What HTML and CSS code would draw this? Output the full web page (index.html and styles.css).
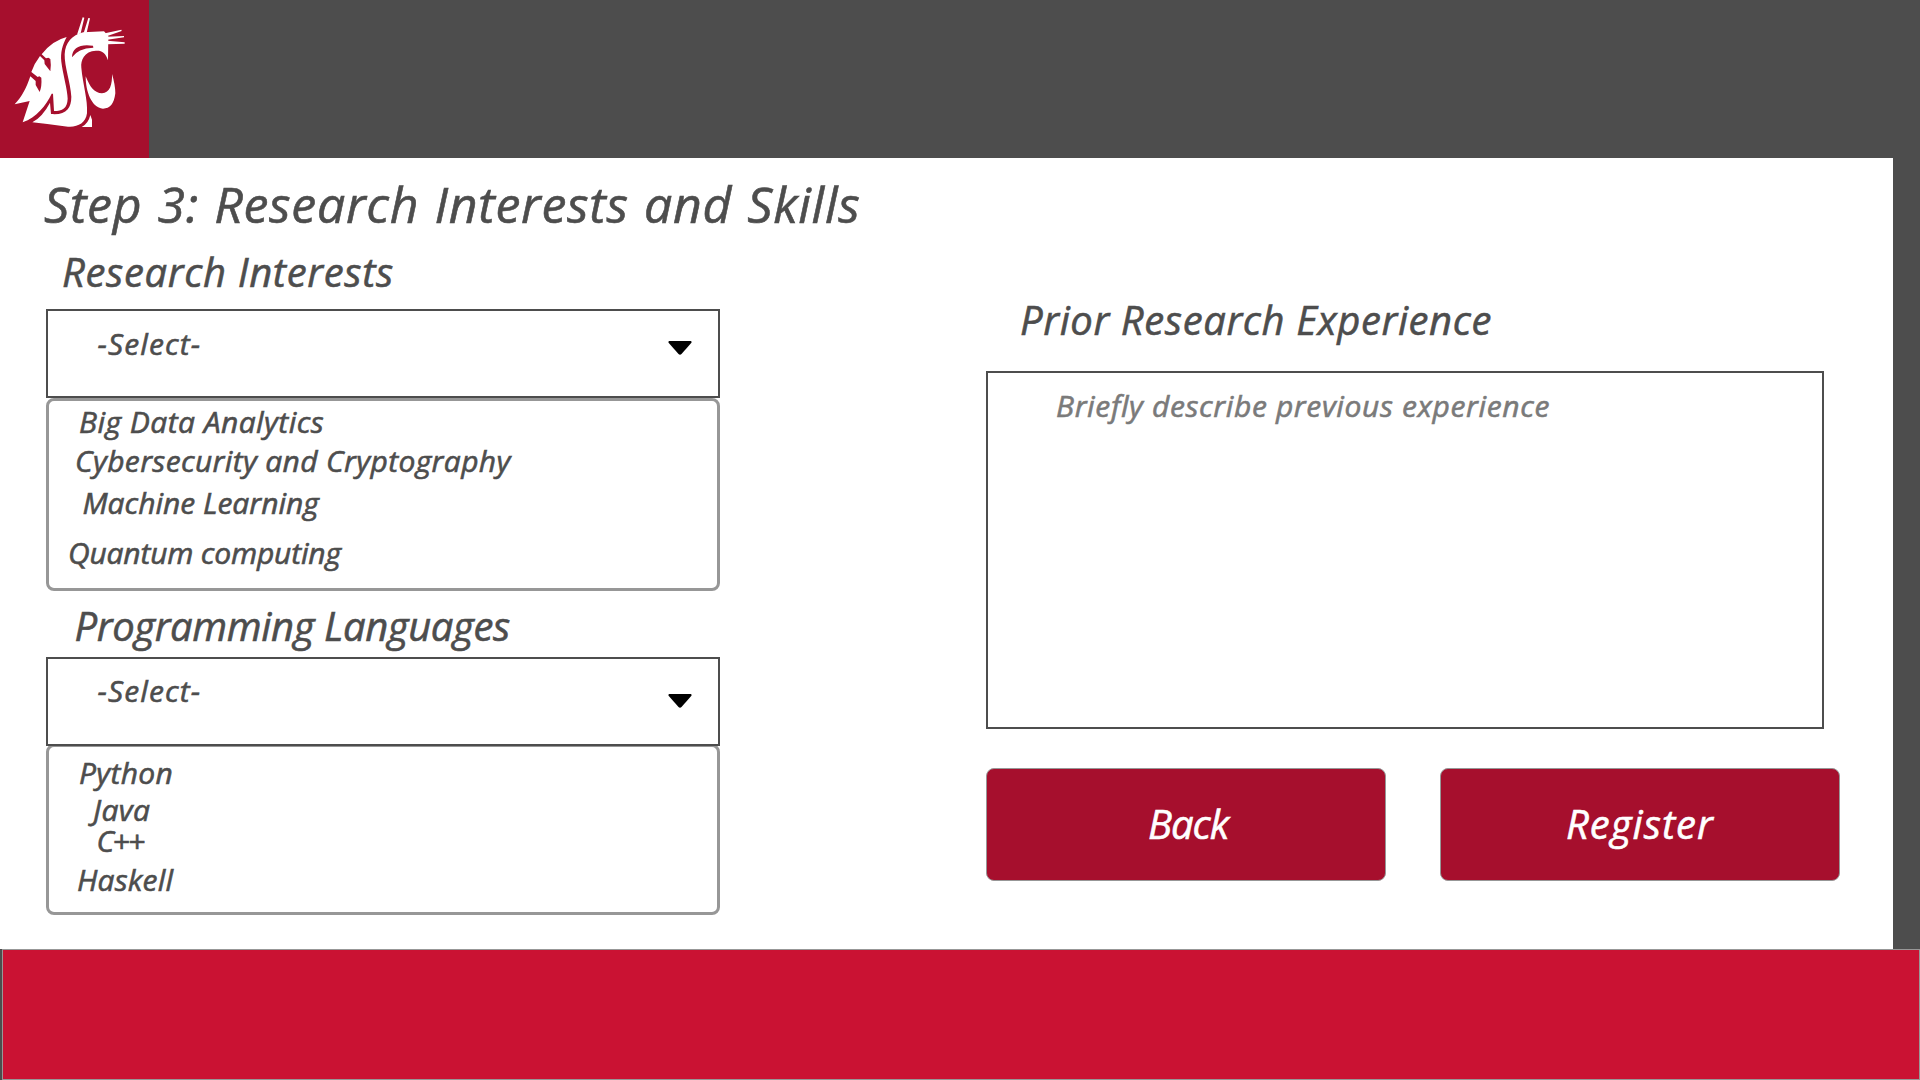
FILE: index.html
```
<!DOCTYPE html>
<html lang="en">
<head>
<meta charset="utf-8">
<title>Step 3: Research Interests and Skills</title>
<link rel="stylesheet" href="styles.css">
</head>
<body>
<header class="topbar">
  <svg class="logo" viewBox="0 0 447 474" aria-label="Cougar head logo">
    <path fill="#fff" d="M200 111C187 135 181 158 184 185C188 220 203 270 203 296C202 325 187 333 162 333L159 281L155 281C138 316 110 352 68 367L89 303L44 313C66 290 80 262 91 229L107 243L107 255L119 276Q126 258 124 233L118 229L113 231L94 216Q103 190 120 168L133 181L134 192L151 214Q154 196 151 177L145 173L138 175L125 163Q156 122 200 111Z"/>
    <path fill="#fff" fill-rule="evenodd" d="M312 94L325 108L324 181C317 158 306 151 288 152C252 154 242 180 244 203C248 250 264 300 261 340C257 370 233 382 204 380Q150 373 97 367Q128 350 150 308L153 342C198 346 214 325 214 290C212 250 193 200 194 163C196 128 215 106 250 97Q282 96 312 94ZM216 172Q233 145 280 143L279 137C242 131 216 142 216 172Z"/>
    <path fill="#fff" d="M257 229C271 264 284 279 306 280C330 279 337 253 336 222Q346 255 346 280C342 312 330 326 309 326C274 323 257 274 257 229Z"/>
    <path fill="#fff" d="M271 345L276 359L276 381L245 381Q265 371 271 345Z"/>
    <path fill="#fff" d="M231 104L248 52L253 53L242 100ZM251 99L265 54L270 55L260 98ZM315 100L364 89L365 93L320 109ZM321 110L372 108L372 112L322 119ZM322 122L374 127L374 131L322 133Z"/>
  </svg>
</header>
<main class="page">
  <h1 class="title">Step 3: Research Interests and Skills</h1>
  <div class="columns">
    <section class="left">
      <h2 class="label interests-label">Research Interests</h2>
      <div class="select">
        <span class="select-text">-Select-</span>
        <svg class="arrow" viewBox="0 0 24 14"><path d="M1.2 0H22.8Q24.2 .6 23.2 2L13.5 13Q12 14.6 10.5 13L.8 2Q-.2 .6 1.2 0Z"/></svg>
      </div>
      <ul class="options interests">
        <li class="big-data">Big Data Analytics</li>
        <li class="security">Cybersecurity and Cryptography</li>
        <li class="learning">Machine Learning</li>
        <li class="quantum">Quantum computing</li>
      </ul>
      <h2 class="label languages-label">Programming Languages</h2>
      <div class="select languages-select">
        <span class="select-text">-Select-</span>
        <svg class="arrow" viewBox="0 0 24 14"><path d="M1.2 0H22.8Q24.2 .6 23.2 2L13.5 13Q12 14.6 10.5 13L.8 2Q-.2 .6 1.2 0Z"/></svg>
      </div>
      <ul class="options languages">
        <li class="python">Python</li>
        <li class="java">Java</li>
        <li class="cpp">C++</li>
        <li class="haskell">Haskell</li>
      </ul>
    </section>
    <section class="right">
      <h2 class="label prior-label">Prior Research Experience</h2>
      <div class="textbox">Briefly describe previous experience</div>
      <div class="actions">
        <button class="button back">Back</button>
        <button class="button register">Register</button>
      </div>
    </section>
  </div>
</main>
<footer class="footer"></footer>
</body>
</html>
```
FILE: styles.css
```
* { box-sizing: border-box; }
body {
  margin: 0;
  width: 1920px;
  height: 1080px;
  overflow: hidden;
  background: #4d4d4d;
  color: #4d4d4d;
  font-family: "Trebuchet MS", "Open Sans", "Noto Sans", sans-serif;
  font-style: italic;
  font-kerning: normal;
  -webkit-text-stroke: 0.6px;
}
.topbar { height: 158px; }
.logo { display: block; width: 149px; height: 158px; background: #a60f2d; }
.page { width: 1893px; height: 791px; padding-top: 16px; background: #fff; }
.title {
  margin: 0 0 0 44px;
  font-size: 50px;
  font-weight: 400;
  line-height: 60px;
  letter-spacing: 0.69px;
  word-spacing: 1.6px;
}
.columns { display: flex; gap: 266px; padding-left: 46px; }
.left { width: 674px; padding-top: 14px; }
.right { width: 854px; padding-top: 62px; }
.label {
  margin: 0;
  font-size: 40px;
  font-weight: 400;
  line-height: 48px;
  white-space: nowrap;
}
.interests-label { padding-left: 16px; letter-spacing: 0.64px; }
.languages-label { margin-top: 11px; padding-left: 28.5px; letter-spacing: -0.38px; }
.prior-label { padding-left: 34px; letter-spacing: 0.6px; }
.select {
  position: relative;
  z-index: 1;
  display: flex;
  justify-content: space-between;
  align-items: flex-start;
  height: 89px;
  margin-top: 13px;
  padding: 18px 26px 0 49.5px;
  border: 2px solid #4d4d4d;
}
.select-text { font-size: 30px; line-height: 30px; letter-spacing: 1.1px; }
.arrow { width: 24px; height: 14px; margin-top: 12px; }
.languages-select { margin-top: 7px; padding-top: 17px; }
.languages-select .arrow { margin-top: 18px; }
.options {
  margin: 0;
  padding: 0;
  list-style: none;
  font-size: 30px;
  line-height: 30px;
  border: 3px solid #979797;
  border-radius: 8px;
}
.interests { height: 193px; padding-top: 6px; }
.languages { height: 171px; margin-top: -2px; padding-top: 11px; }
.big-data { padding-left: 30px; letter-spacing: 0.45px; }
.security { margin-top: 9px; padding-left: 26px; letter-spacing: 0.36px; }
.learning { margin-top: 12px; padding-left: 33.5px; letter-spacing: 0; }
.quantum { margin-top: 20px; padding-left: 19px; letter-spacing: -0.18px; }
.python { padding-left: 30px; letter-spacing: 0.33px; }
.java { margin-top: 7px; padding-left: 44px; letter-spacing: 0.4px; }
.cpp { margin-top: 1px; padding-left: 47.5px; letter-spacing: -1.6px; }
.haskell { margin-top: 9px; padding-left: 28px; letter-spacing: 0.15px; }
.textbox {
  width: 838px;
  height: 358px;
  margin-top: 27px;
  padding: 18px 0 0 68px;
  border: 2px solid #4d4d4d;
  color: #7a7a7a;
  font-size: 30px;
  line-height: 30px;
  letter-spacing: 0.63px;
}
.actions { display: flex; gap: 54px; margin-top: 39px; }
.button {
  display: flex;
  align-items: flex-start;
  width: 400px;
  height: 113px;
  border: 1px solid #979797;
  border-radius: 8px;
  background: #a60f2d;
  color: #fff;
  font: italic 400 40px/48px "Trebuchet MS", "Open Sans", "Noto Sans", sans-serif;
  -webkit-text-stroke: 0.6px;
}
.back { padding: 31px 0 0 161px; letter-spacing: -1px; }
.register { padding: 31px 0 0 125px; letter-spacing: 1px; }
.footer { width: 1918px; height: 131px; margin-left: 2px; border: 1px solid #979797; background: #ca1233; }
```
